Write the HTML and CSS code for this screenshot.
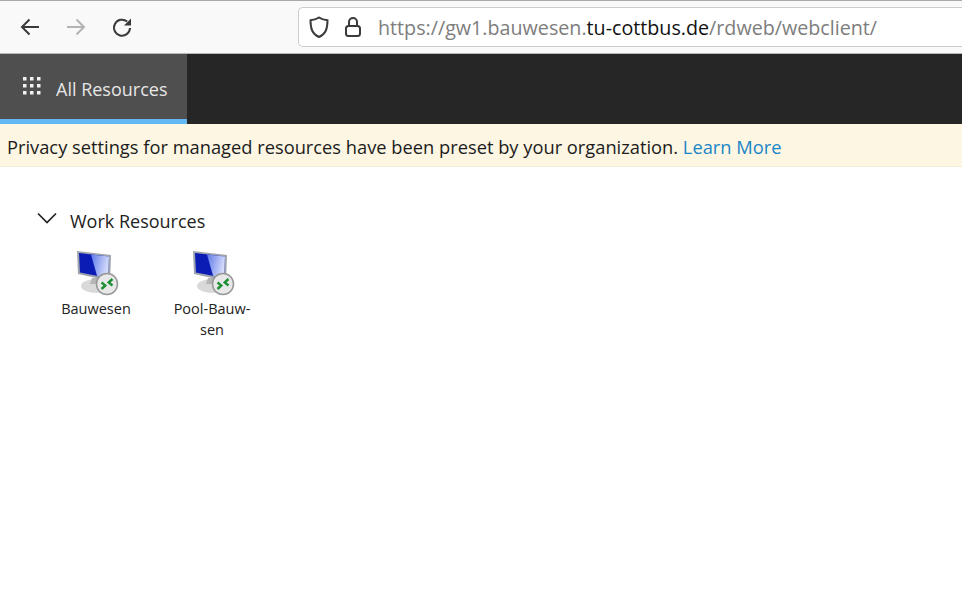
FILE: index.html
```html
<!DOCTYPE html>
<html lang="en">
  <head>
    <meta charset="UTF-8" />
    <title>All Resources</title>
    <link rel="stylesheet" href="styles.css">
  </head>
  <body>
    <div class="browser-bar">
      <div class="nav-buttons">
        <svg class="nav-icon" width="22" height="22" viewBox="0 0 22 22"><path d="M20 11H3M10.500 3.500 3 11l7.500 7.500" stroke="#3a3a3c"/></svg>
        <svg class="nav-icon" width="22" height="22" viewBox="0 0 22 22"><path d="M2 11h17M11.500 3.500 19 11l-7.500 7.500" stroke="#b4b4b6"/></svg>
        <svg class="nav-icon" width="22" height="22" viewBox="0 0 22 22"><path d="M19 12a8 8 0 1 1-2.800-6.400" stroke="#3a3a3c"/><path d="M20 2.500v7h-7z" fill="#3a3a3c" stroke="none"/></svg>
      </div>
      <div class="address-box">
        <svg class="nav-icon" width="22" height="24" viewBox="0 0 22 24"><path d="M11 2.500c2.500 1.700 5 2.500 8.500 2.800 0 8-1.500 13.700-8.500 16.700C4 19 2.500 13.300 2.500 5.300 6 5 8.500 4.200 11 2.500z" stroke="#3a3a3c"/></svg>
        <svg class="nav-icon" width="18" height="22" viewBox="0 0 18 22"><path d="M5 10V6a4 4 0 0 1 8 0v4" stroke="#3a3a3c"/><rect x="2" y="10" width="14" height="10" rx="2.500" stroke="#3a3a3c"/></svg>
        <span class="url">https://gw1.bauwesen.<b>tu-cottbus.de</b>/rdweb/webclient/</span>
      </div>
    </div>

    <div class="top-nav">
      <div class="nav-tab">
        <svg width="18" height="18" viewBox="0 0 18 18" fill="#f2f2f2">
          <rect x="0" y="0" width="3.500" height="3.500"/><rect x="7" y="0" width="3.500" height="3.500"/><rect x="14" y="0" width="3.500" height="3.500"/>
          <rect x="0" y="7" width="3.500" height="3.500"/><rect x="7" y="7" width="3.500" height="3.500"/><rect x="14" y="7" width="3.500" height="3.500"/>
          <rect x="0" y="14" width="3.500" height="3.500"/><rect x="7" y="14" width="3.500" height="3.500"/><rect x="14" y="14" width="3.500" height="3.500"/>
        </svg>
        <span>All Resources</span>
      </div>
    </div>

    <div class="notice">
      Privacy settings for managed resources have been preset by your organization.
      <a href="#">Learn More</a>
    </div>

    <div class="content">
      <div class="group-title">
        <svg width="20" height="12" viewBox="0 0 20 12"><path d="M1 1.500l9 9 9-9" stroke="#222"/></svg>
        <span>Work Resources</span>
      </div>
      <div class="resources">
        <div class="resource">
          <svg class="pc-icon" width="46" height="46" viewBox="0 0 46 46">
            <defs>
              <linearGradient id="screen-light" x1="0" y1="0" x2="1" y2="0.300">
                <stop offset="0" stop-color="#5f78ea"/>
                <stop offset="1" stop-color="#d5dcfa"/>
              </linearGradient>
            </defs>
            <g id="pc">
              <ellipse cx="22" cy="36" rx="16" ry="7" fill="#d9d9d9"/>
              <path d="M17 28h10l2 6H15z" fill="#b5b5b5"/>
              <path d="M2 1l34 4-1 26-32-7z" fill="#9ea3ad"/>
              <path d="M4 3l30 3.500-1 21.500-28-5.500z" fill="#0a1cb4"/>
              <path d="M16 4.400l18 2.100-1 21.500-11-2.200z" fill="url(#screen-light)"/>
              <circle cx="32" cy="34" r="10.500" fill="#e8e8e8" stroke="#979797" stroke-width="1.500"/>
              <path d="M26.500 32.500l3.800 3-3.800 3.500" fill="none" stroke="#1f8f35" stroke-width="2.400"/>
              <path d="M37.500 29l-3.800 3.500 3.800 3" fill="none" stroke="#1f8f35" stroke-width="2.400"/>
            </g>
          </svg>
          <span>Bauwesen</span>
        </div>
        <div class="resource">
          <svg class="pc-icon" width="46" height="46" viewBox="0 0 46 46"><use href="#pc"/></svg>
          <span>Pool-Bauw-<br />sen</span>
        </div>
      </div>
    </div>
  </body>
</html>
```

FILE: styles.css
```css
body {
  font-family: "Open Sans", "Noto Sans", Arial, sans-serif;
  background-color: #fff;
  margin: 0;
  padding: 0;
  overflow: hidden;
}
.nav-icon {
  fill: none;
  flex: none;
  stroke-width: 2;
}
.browser-bar {
  height: 52px;
  display: flex;
  align-items: center;
  background: #f9f9fa;
  border-top: 1px solid #a9a9a9;
  border-bottom: 1px solid #b9b9b9;
}
.nav-buttons {
  width: 298px;
  display: flex;
  gap: 24px;
  padding-left: 19px;
  box-sizing: border-box;
}
.address-box {
  flex: 1;
  height: 38px;
  display: flex;
  align-items: center;
  gap: 14px;
  padding-left: 9px;
  background: #fff;
  border: 1px solid #ccc;
  border-right: none;
  border-radius: 5px 0 0 5px;
}
.url {
  font-size: 19.7px;
  color: #7d7d7d;
  margin-left: 2px;
  margin-top: 1px;
  white-space: nowrap;
}
.url b {
  font-weight: 400;
  color: #111;
}
.top-nav {
  height: 70px;
  background: #262626;
}
.nav-tab {
  width: 164px;
  height: 65px;
  display: flex;
  align-items: center;
  gap: 15px;
  padding-left: 23px;
  background: #4f4f4f;
  border-bottom: 5px solid #63b7f2;
  color: #e6e6e6;
  font-size: 18px;
}
.nav-tab span {
  margin-top: 4px;
}
.nav-tab svg {
  margin-top: -2px;
}
.notice {
  height: 43px;
  line-height: 46px;
  padding-left: 7px;
  box-sizing: border-box;
  background: #fdf6e3;
  border-bottom: 1px solid #f3ecd8;
  color: #1c1c1c;
  font-size: 18.3px;
  white-space: nowrap;
}
.notice a {
  color: #1a86c8;
  text-decoration: none;
}
.content {
  padding: 42px 0 0 37px;
}
.group-title {
  display: flex;
  align-items: center;
  gap: 13px;
  font-size: 18px;
  color: #222;
}
.group-title svg {
  fill: none;
  stroke-width: 1.7;
  margin-top: -7px;
}
.resources {
  display: flex;
  gap: 30px;
  margin-top: 17px;
  margin-left: 16px;
}
.resource {
  width: 86px;
  display: flex;
  flex-direction: column;
  align-items: center;
  text-align: center;
  font-size: 14.5px;
  line-height: 21px;
  color: #222;
}
.pc-icon {
  display: block;
  margin-bottom: 2px;
  margin-left: 3px;
}
```
